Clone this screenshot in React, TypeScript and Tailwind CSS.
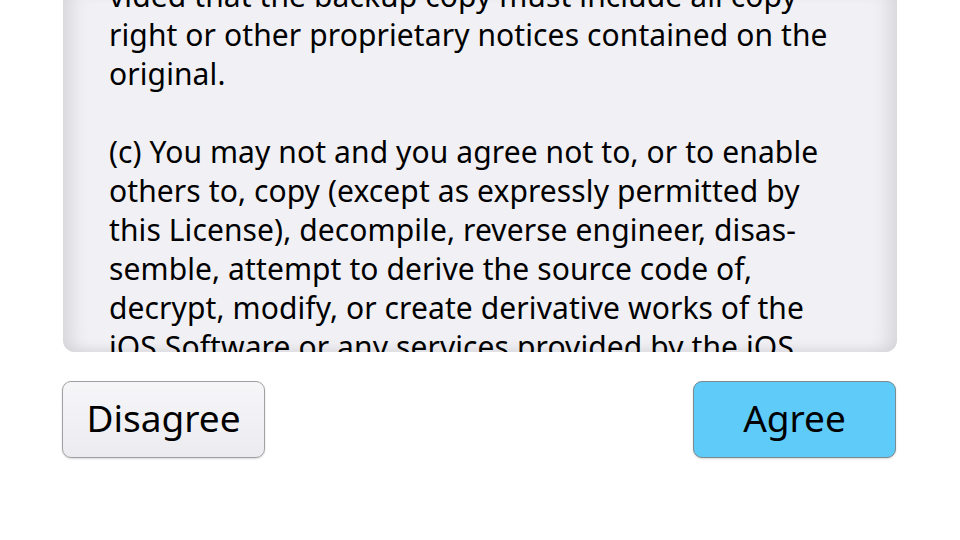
import React from "react";

const lines = [
  "vided that the backup copy must include all copy",
  "right or other proprietary notices contained on the",
  "original.",
  "\u00a0",
  "(c) You may not and you agree not to, or to enable",
  "others to, copy (except as expressly permitted by",
  "this License), decompile, reverse engineer, disas-",
  "semble, attempt to derive the source code of,",
  "decrypt, modify, or create derivative works of the",
  "iOS Software or any services provided by the iOS",
];

export default function App() {
  return (
    <div
      className="w-[960px] h-[540px] bg-white overflow-hidden text-black"
      style={{ fontFamily: '"Noto Sans", "Open Sans", sans-serif' }}
    >
      <div className="ml-[63px] w-[834px] h-[352px] overflow-hidden rounded-b-[12px] bg-[#f1f0f5] shadow-[inset_22px_0_18px_-14px_#d6d6da,inset_-22px_0_18px_-14px_#d6d6da,inset_0_-12px_12px_-10px_#d6d6da]">
        <div className="-mt-[24px] pl-[46px] text-[30px] leading-[39px] tracking-[0.1px]">
          {lines.map((l, i) => (
            <div key={i} className="whitespace-nowrap">
              {l}
            </div>
          ))}
        </div>
      </div>
      <div className="flex justify-between pl-[62px] pr-[64px] pt-[29px]">
        <button className="w-[203px] h-[77px] pb-[4px] rounded-[9px] border border-[#a0a0a4] bg-gradient-to-b from-[#f6f6f9] to-[#ececf0] text-[37px] leading-none shadow-[0_1px_2px_rgba(0,0,0,0.15)]">
          Disagree
        </button>
        <button className="w-[203px] h-[77px] pb-[4px] rounded-[9px] border border-[#7d8a90] bg-[#5ecbf9] text-[37px] leading-none shadow-[0_1px_2px_rgba(0,0,0,0.15)]">
          Agree
        </button>
      </div>
    </div>
  );
}
